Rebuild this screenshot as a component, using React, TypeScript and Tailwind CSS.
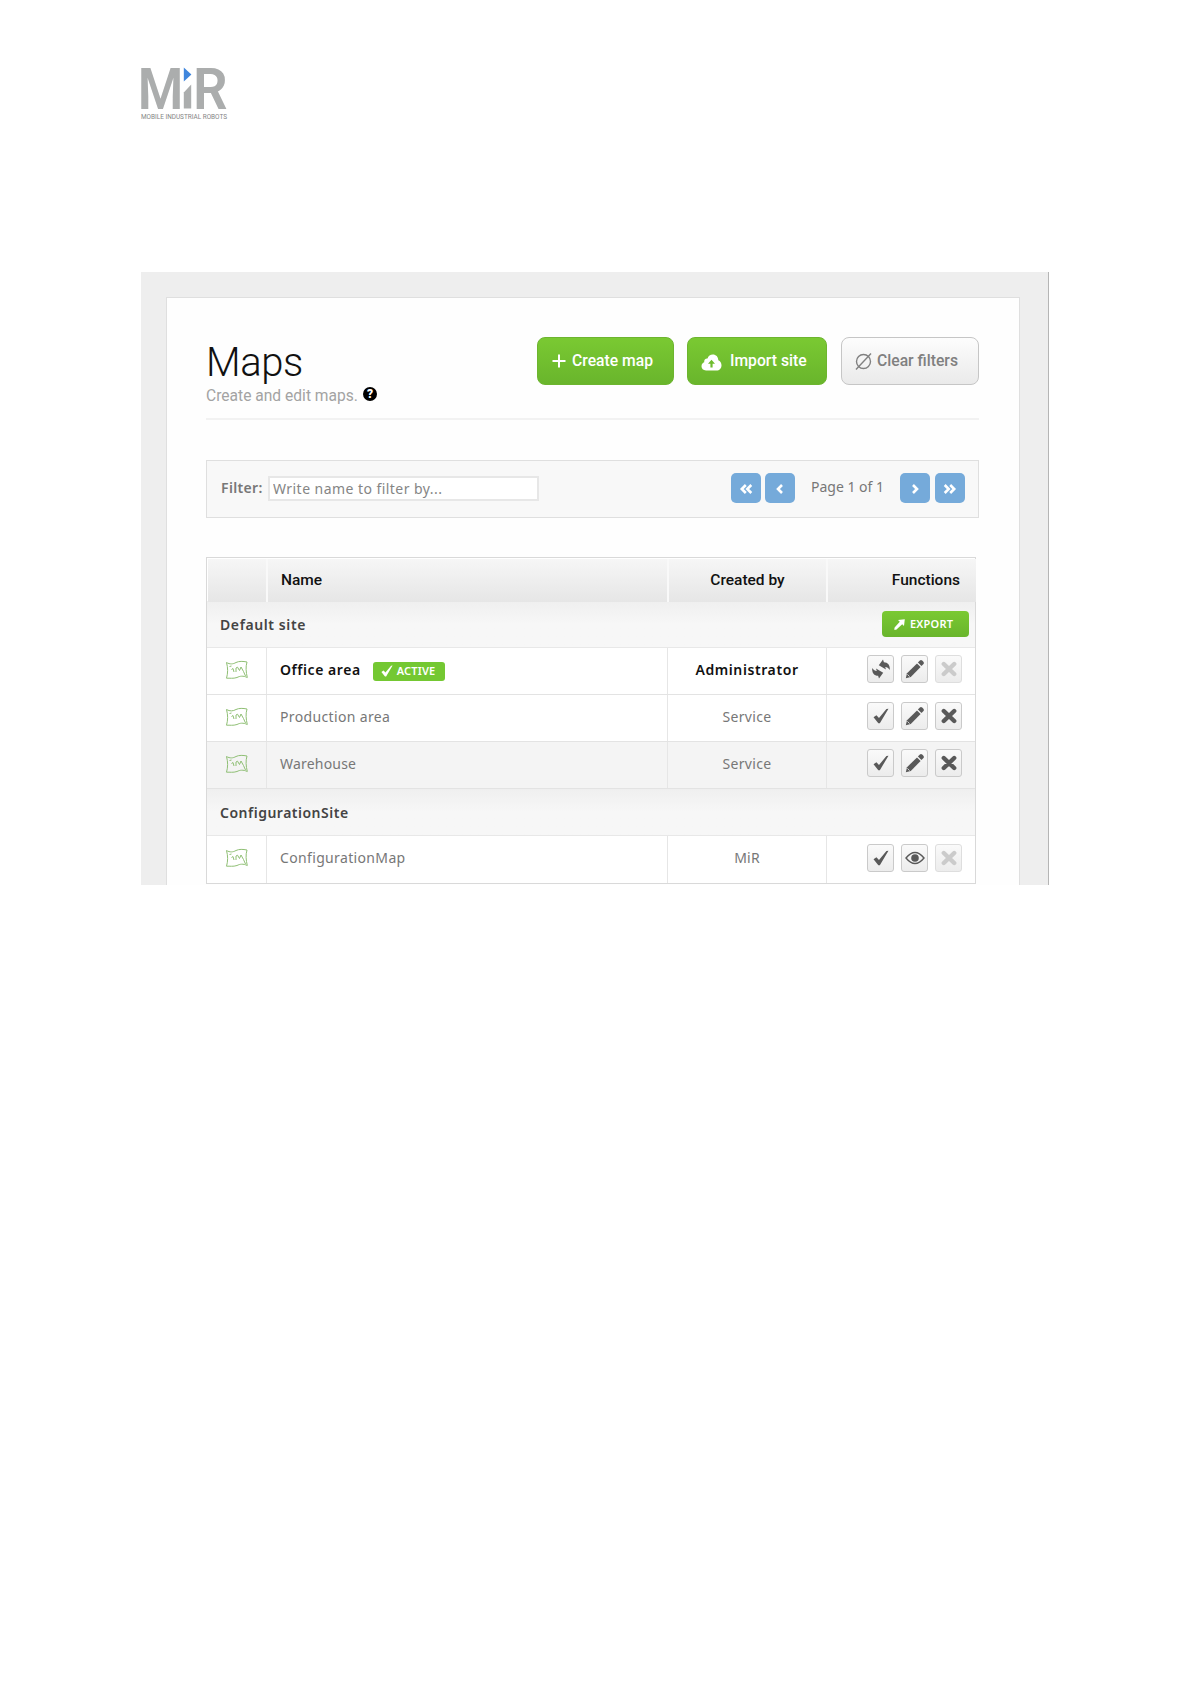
import React from "react";

type Action = "switch" | "check" | "edit" | "view" | "delete" | "disabled";

interface MapRow {
  name: string;
  nameClass: string;
  owner: string;
  ownerClass: string;
  active?: boolean;
  shaded?: boolean;
  actions: Action[];
}

interface Site {
  name: string;
  nameClass: string;
  exportable?: boolean;
  maps: MapRow[];
}

const sites: Site[] = [
  {
    name: "Default site",
    nameClass: "tracking-[0.6px]",
    exportable: true,
    maps: [
      {
        name: "Office area",
        nameClass: "tracking-[0.55px]",
        owner: "Administrator",
        ownerClass: "tracking-[0.6px]",
        active: true,
        actions: ["switch", "edit", "disabled"],
      },
      {
        name: "Production area",
        nameClass: "tracking-[0.35px]",
        owner: "Service",
        ownerClass: "tracking-[0.3px]",
        actions: ["check", "edit", "delete"],
      },
      {
        name: "Warehouse",
        nameClass: "tracking-[0.2px]",
        owner: "Service",
        ownerClass: "tracking-[0.3px]",
        shaded: true,
        actions: ["check", "edit", "delete"],
      },
    ],
  },
  {
    name: "ConfigurationSite",
    nameClass: "tracking-[0.5px]",
    maps: [
      {
        name: "ConfigurationMap",
        nameClass: "tracking-[0.35px]",
        owner: "MiR",
        ownerClass: "tracking-[0.2px]",
        actions: ["check", "view", "disabled"],
      },
    ],
  },
];

const Logo: React.FC = () => (
  <svg
    width="96"
    height="70"
    viewBox="-4 -12 96 70"
    className="block -ml-[4px] -mt-[12px] overflow-visible"
    fontFamily="Roboto, sans-serif"
  >
    <text x="-3.2" y="41.5" fontSize="57" fontWeight="600" fill="#abadad" textLength="45.6" lengthAdjust="spacingAndGlyphs">
      M
    </text>
    <path d="M42.8 25.5 50.2 17.5V41.5H42.8Z" fill="#abadad" />
    <path d="M42.8 0.5 50.4 7.5 42.8 14.5Z" fill="#3f86dd" />
    <text x="51.9" y="41.5" fontSize="57" fontWeight="600" fill="#abadad" textLength="34.6" lengthAdjust="spacingAndGlyphs">
      R
    </text>
    <text x="0" y="52" fontSize="8" fill="#858686" textLength="86" lengthAdjust="spacingAndGlyphs">
      MOBILE INDUSTRIAL ROBOTS
    </text>
  </svg>
);

const CheckShape = () => <path d="M0.5 8.6 3.2 6.8 5.6 9.4 12.6 1 14.5 0.6 6.4 14.4H5Z" fill="currentColor" />;

const MapIcon: React.FC = () => (
  <svg width="24" height="20" viewBox="0 0 24 20" fill="none" stroke="#8fbf74" strokeWidth="1">
    <path d="M1.5 2.5C5 4.5 8 4.2 11 2.5 14 1 18 1.2 22 2 20.5 7 21 12 22.3 17.5 18 15.5 15 16 12 17.5 8 18.8 5 18 1.5 18.2 3 13 3 8 1.5 2.5Z" />
    <path d="M4.5 6.5 6.5 6M6.5 9.5 8 8.5 9 12M11 12V8L12.5 7.2 14.5 10.5 16 7 18.5 11.5 20.5 16" />
  </svg>
);

const ActionIcon: React.FC<{ type: Action }> = ({ type }) => {
  switch (type) {
    case "check":
      return (
        <svg width="16" height="16" viewBox="0 0 15 15">
          <CheckShape />
        </svg>
      );
    case "switch":
      return (
        <svg width="20" height="20" viewBox="0 0 20 20" fill="currentColor">
          <path d="M7.8 6.2 12 0.6 12.9 3.2C16.8 3.2 19.2 6 18.8 11 17.5 8.9 16 8 14.2 8L15 10.6Z" />
          <path d="M12.2 13.8 8 19.4 7.1 16.8C3.2 16.8 0.8 14 1.2 9 2.5 11.1 4 12 5.8 12L5 9.4Z" />
        </svg>
      );
    case "edit":
      return (
        <svg width="20" height="20" viewBox="0 0 20 20" fill="currentColor">
          <path d="M0.8 19.2 2 14.2 12 4.4 15.6 8 5.8 18Z" />
          <path d="M12.9 3.5 14.9 1.5Q16 0.5 17.2 1.6L18.4 2.8Q19.5 4 18.5 5.1L16.5 7.1Z" />
          <path d="M2.4 15.4 4.6 17.6" stroke="#eee" strokeWidth="0.8" />
        </svg>
      );
    case "view":
      return (
        <svg width="20" height="14" viewBox="0 0 20 14">
          <path d="M1 7Q10-4 19 7 10 18 1 7Z" fill="none" stroke="currentColor" strokeWidth="1.4" />
          <circle cx="10" cy="7" r="3.8" fill="currentColor" />
        </svg>
      );
    default:
      return (
        <svg width="16" height="16" viewBox="0 0 16 16" stroke="currentColor" strokeWidth="4.4" strokeLinecap="round">
          <path d="M2.8 3 13.2 13M13.2 3 2.8 13" />
        </svg>
      );
  }
};

const ActionButton: React.FC<{ type: Action }> = ({ type }) => (
  <button
    className={`w-[27px] h-[28px] flex items-center justify-center rounded-[3px] border bg-linear-to-b from-[#fafafa] to-[#ececec] ${
      type === "disabled" ? "border-[#dedede] text-[#cbcbcb]" : "border-[#cacaca] text-[#595959]"
    }`}
  >
    <ActionIcon type={type} />
  </button>
);

const PageButton: React.FC<{ dir: "left" | "right"; double?: boolean }> = ({ dir, double }) => (
  <button className="w-[30px] h-[30px] flex items-center justify-center rounded-[5px] bg-[#75aada] text-white">
    <svg
      width="14"
      height="12"
      viewBox="0 0 14 12"
      fill="none"
      stroke="currentColor"
      strokeWidth="2.6"
      className={`mt-[2px] ${dir === "right" ? "rotate-180" : ""}`}
    >
      {double ? <path d="M6.8 2 2.8 6 6.8 10M12.3 2 8.3 6 12.3 10" /> : <path d="M9 2 5 6 9 10" />}
    </svg>
  </button>
);

const columns = "grid grid-cols-[60px_401px_159px_148px]";

const App: React.FC = () => {
  return (
    <div className="w-[1191px] h-[1684px] bg-white overflow-hidden pl-[141px] pt-[67px] font-['Noto_Sans',sans-serif] text-[14px] text-[#777]">
      <Logo />

      <div className="w-[908px] h-[613px] mt-[147px] bg-[#eeeeee] border-r border-[#b5b5b5] pl-[25px] pt-[25px]">
        <main className="w-[854px] h-[588px] bg-[#fefefe] border border-b-0 border-[#dfdfdf] pl-[39px] pt-[39px]">
          {/* Page header */}
          <header className="w-[773px] h-[83px] flex border-b-2 border-[#f2f2f2] font-[Roboto,sans-serif]">
            <div className="w-[331px]">
              <h1 className="text-[40px] leading-[48px] pt-[2px] -mb-px font-light text-[#111] tracking-[-0.4px]">Maps</h1>
              <div className="flex items-center text-[15.6px] leading-[20px] text-[#a3a3a3]">
                <span>Create and edit maps.</span>
                <span className="w-[14px] h-[14px] ml-[5px] -mt-[4px] rounded-full bg-black text-white text-[12px] leading-[14px] font-black text-center">
                  ?
                </span>
              </div>
            </div>
            <button className="w-[137px] h-[48px] pl-[14px] flex items-center rounded-[8px] border border-[#6db52f] bg-linear-to-b from-[#7ac932] to-[#69b52c] text-white text-[15.7px] font-medium">
              <svg width="14" height="14" viewBox="0 0 14 14" stroke="currentColor" strokeWidth="2">
                <path d="M7 0.5V13.5M0.5 7H13.5" />
              </svg>
              <span className="ml-[6px]">Create map</span>
            </button>
            <button className="w-[140px] h-[48px] ml-[13px] pl-[13px] flex items-center rounded-[8px] border border-[#6db52f] bg-linear-to-b from-[#7ac932] to-[#69b52c] text-white text-[15.7px] font-medium">
              <svg width="21" height="17" viewBox="0 0 21 17" className="mt-[2px]">
                <path
                  d="M5 16.5C2 16.5 0.5 14.5 0.5 12.3 0.5 10.2 1.7 8.9 3.2 8.3 2.8 6 4.5 4.4 6.5 4.6 7.3 2 9.3 0.5 11.8 0.5 15 0.5 17.3 2.9 17.3 6.2 19.4 7 20.5 9 20.5 11.2 20.5 14.3 18.5 16.5 15.5 16.5Z"
                  fill="#fff"
                />
                <path d="M10.5 5.8 14 9.8H11.6V13.5H9.4V9.8H7Z" fill="#6fbc2e" />
              </svg>
              <span className="ml-[8px]">Import site</span>
            </button>
            <button className="w-[138px] h-[48px] ml-[14px] pl-[13px] flex items-center rounded-[8px] border border-[#c6c6c6] bg-linear-to-b from-[#fdfdfd] to-[#eaeaea] text-[#808080] text-[15.7px] font-medium">
              <svg width="17" height="17" viewBox="0 0 17 17" fill="none" stroke="currentColor" strokeWidth="1.4" className="mt-px">
                <circle cx="8.5" cy="8.5" r="7" />
                <path d="M1 16.5 16 0.5" />
              </svg>
              <span className="ml-[5px]">Clear filters</span>
            </button>
          </header>

          {/* Filter bar */}
          <div className="w-[773px] h-[58px] mt-[40px] pl-[14px] pr-[13px] pb-[2px] flex items-center border border-[#dfdfdf] bg-[#f8f8f8]">
            <label className="w-[47px] -mt-px font-semibold tracking-[0.35px]">Filter:</label>
            <input
              className="w-[271px] h-[25px] pl-[3px] border-2 border-[#e7e7e7] bg-white placeholder:text-[#858585] text-[14px] tracking-[0.45px]"
              placeholder="Write name to filter by..."
            />
            <div className="ml-auto flex items-center">
              <PageButton dir="left" double />
              <div className="w-[4px]" />
              <PageButton dir="left" />
              <span className="w-[105px] -mt-[3px] text-center text-[14px] whitespace-nowrap">Page 1 of 1</span>
              <PageButton dir="right" />
              <div className="w-[5px]" />
              <PageButton dir="right" double />
            </div>
          </div>

          {/* Maps table */}
          <div className="w-[770px] mt-[39px] border border-[#d9d9d9] bg-white">
            <div
              className={`${columns} h-[43px] p-px font-[Roboto,sans-serif] text-[15.5px] font-medium text-[#111] leading-[43px]`}
            >
              <div className="bg-linear-to-b from-[#f6f6f6] to-[#e6e6e6] border-r-2 border-[#f9f9f9]" />
              <div className="pl-[13px] bg-linear-to-b from-[#f6f6f6] to-[#e6e6e6] border-r-2 border-[#f9f9f9]">Name</div>
              <div className="text-center bg-linear-to-b from-[#f6f6f6] to-[#e6e6e6] border-r-2 border-[#f9f9f9]">
                Created by
              </div>
              <div className="pr-[16px] text-right bg-linear-to-b from-[#f6f6f6] to-[#e6e6e6]">Functions</div>
            </div>
            {sites.map((site) => (
              <React.Fragment key={site.name}>
                <div className="h-[47px] pl-[13px] pr-[6px] flex items-center justify-between border-b border-[#e8e8e8] bg-linear-to-b from-[#efefef] to-[#f7f7f7] to-50%">
                  <span className={`font-semibold text-[#444] ${site.nameClass}`}>{site.name}</span>
                  {site.exportable && (
                    <button className="w-[87px] h-[26px] pl-[12px] flex items-center rounded-[4px] bg-linear-to-b from-[#7ac932] to-[#69b52c] text-white text-[11px] font-semibold tracking-[0.2px]">
                      <svg width="11" height="11" viewBox="0 0 11 11" fill="currentColor">
                        <path d="M4 1 10.8 0.2 10 7 8.2 5.3 2.2 10.8 0.2 10.8 0.6 8.6 5.8 2.8Z" />
                      </svg>
                      <span className="ml-[5px]">EXPORT</span>
                    </button>
                  )}
                </div>
                {site.maps.map((map) => (
                  <div
                    key={map.name}
                    className={`${columns} h-[47px] border-b border-[#e3e3e3] last:border-b-0 ${map.shaded ? "bg-[#f4f4f4]" : "bg-white"}`}
                  >
                    <div className="flex items-center justify-center border-r border-[#e6e6e6] pb-[3px]">
                      <MapIcon />
                    </div>
                    <div className="pl-[13px] pb-[4px] flex items-center border-r border-[#e6e6e6]">
                      <span className={`${map.active ? "font-semibold text-[#111]" : ""} ${map.nameClass}`}>{map.name}</span>
                      {map.active && (
                        <span className="w-[72px] h-[19px] ml-[12px] mt-[4px] pl-[8px] flex items-center rounded-[3px] bg-[#74c832] text-white text-[11px] font-semibold tracking-[0.2px]">
                          <svg width="12" height="12" viewBox="0 0 15 15">
                            <CheckShape />
                          </svg>
                          <span className="ml-[4px]">ACTIVE</span>
                        </span>
                      )}
                    </div>
                    <div className="pb-[4px] flex items-center justify-center border-r border-[#e6e6e6]">
                      <span className={`${map.active ? "font-semibold text-[#111]" : ""} ${map.ownerClass}`}>{map.owner}</span>
                    </div>
                    <div className="pb-[4px] pr-[13px] flex items-center justify-end gap-[7px]">
                      {map.actions.map((action) => (
                        <ActionButton key={action} type={action} />
                      ))}
                    </div>
                  </div>
                ))}
              </React.Fragment>
            ))}
          </div>
        </main>
      </div>
    </div>
  );
};

export default App;
